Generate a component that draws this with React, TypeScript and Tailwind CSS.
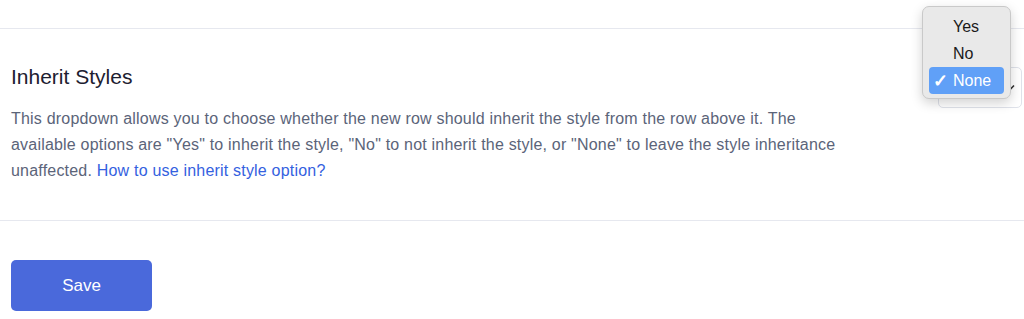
import React from "react";

export default function App() {
  return (
    <div
      className="relative w-[1024px] h-[319px] bg-white overflow-hidden"
      style={{ fontFamily: '"Liberation Sans", Arial, Helvetica, sans-serif' }}
    >
      <div className="h-[29px] border-b border-[#e6e8ef]" />
      <div className="pt-[34px] pb-[36px] pl-[11px] border-b border-[#e6e8ef]">
        <div className="flex items-start h-[28px]">
          <h2 className="flex-1 text-[21px] leading-[28px] text-[#1d2030] font-normal">
            Inherit Styles
          </h2>
          <div className="relative shrink-0 mt-[4px] mr-[2px] w-[84px] h-[41px] rounded-[5px] border border-[#dfe2ea] bg-white">
            <svg
              className="absolute left-[66px] top-[16px]"
              width="10"
              height="7"
              viewBox="0 0 10 7"
            >
              <path d="M1 1.5 L5 5.5 L9 1.5" fill="none" stroke="#333" strokeWidth="1.6" />
            </svg>
          </div>
        </div>
        <p className="mt-[15px] w-[850px] text-[16px] leading-[26px] tracking-[0.2px] text-[#5b6479]">
          This dropdown allows you to choose whether the new row should inherit the style from the row above it. The available options are "Yes" to inherit the style, "No" to not inherit the style, or "None" to leave the style inheritance unaffected.{" "}
          <a className="text-[#3461e0]" href="#">
            How to use inherit style option?
          </a>
        </p>
      </div>
      <div className="pt-[39px] pl-[11px]">
        <button className="w-[141px] h-[51px] rounded-[5px] bg-[#4a69db] text-white text-[17px]">
          Save
        </button>
      </div>

      <div className="absolute left-[922px] top-[6px] w-[89px] h-[93px] rounded-[7px] border border-[#c9c9c9] bg-[#e9e9e9] shadow-[0_4px_12px_rgba(0,0,0,0.18)] px-[6px] pt-[6px]">
        <div className="h-[27px] flex items-center pl-[24px] text-[16px] text-[#1a1a1a]">Yes</div>
        <div className="h-[27px] flex items-center pl-[24px] text-[16px] text-[#1a1a1a]">No</div>
        <div className="h-[27px] flex items-center rounded-[4px] bg-[#60a0f7] text-white text-[16px]">
          <span className="w-[24px] pl-[4px] text-[18px] leading-none font-bold">✓</span>
          <span>None</span>
        </div>
      </div>
    </div>
  );
}
